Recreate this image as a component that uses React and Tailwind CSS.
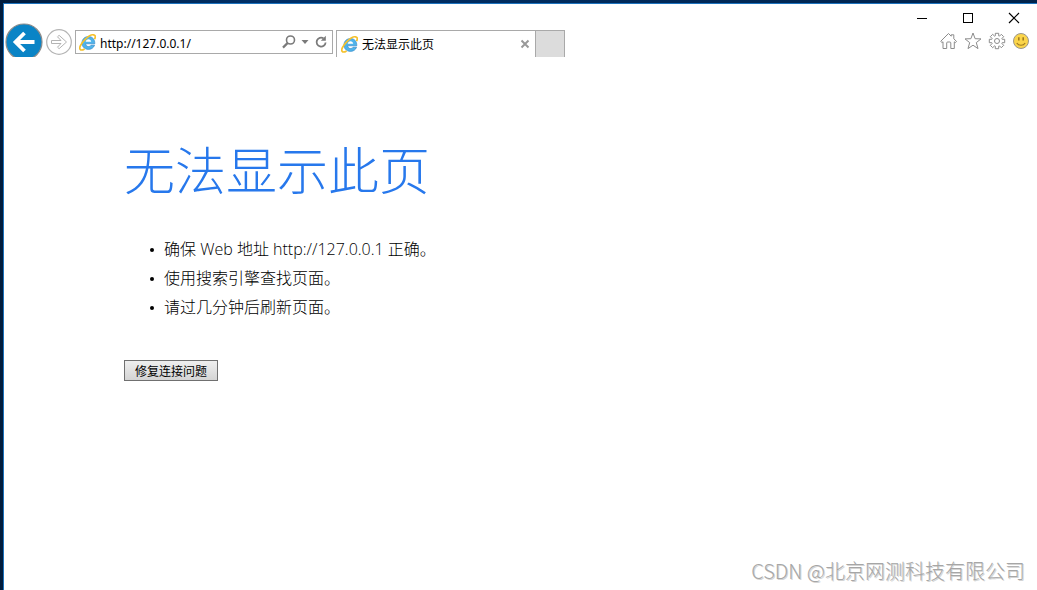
import clsx from "clsx";

const TIPS = [
  "确保 Web 地址 http://127.0.0.1 正确。",
  "使用搜索引擎查找页面。",
  "请过几分钟后刷新页面。",
];

function IeLogo() {
  return (
    <svg viewBox="0 0 17 17" className="size-[17px] shrink-0" fill="none">
      <path
        d="M15.600 11.200c-1 2.700-3.200 4.200-6.200 4.200-3.800 0-6.500-2.700-6.500-6.300C2.900 5.300 5.700 2.500 9.500 2.500c4 0 6.500 2.900 6.300 7.300H6.700c.2 1.700 1.200 2.700 2.900 2.700 1.100 0 1.900-.4 2.400-1.300z"
        fill="#4fb3ea"
        stroke="#2b83c4"
        strokeWidth=".6"
      />
      <path d="M6.700 7.700h5.500C12 6.100 11 5.200 9.500 5.200 8 5.200 7 6.100 6.700 7.700z" fill="#fff" />
      <path
        d="M15.500 5.200c.9-1.800 1-3.400 0-4-1.900-1.100-6.100.9-9.800 4.600C1.700 9.800-.2 14 1.200 15.400c.8.900 2.500.600 4.400-.5"
        stroke="#f5c12c"
        strokeWidth="1.700"
      />
    </svg>
  );
}

function CaptionButton({ label, children }) {
  return (
    <button aria-label={label} className="flex h-7 w-[46px] items-center justify-center">
      <svg viewBox="0 0 12 12" className="size-3" fill="none" stroke="#000" shapeRendering="crispEdges">
        {children}
      </svg>
    </button>
  );
}

function ToolButton({ label, children }) {
  return (
    <button aria-label={label}>
      <svg viewBox="0 0 18 18" className="size-[18px]" fill="none" stroke="#8c8c8c">
        {children}
      </svg>
    </button>
  );
}

function TitleBar() {
  return (
    <div className="flex h-[26px] justify-end">
      <CaptionButton label="最小化">
        <path d="M1 6.500h10" />
      </CaptionButton>
      <CaptionButton label="最大化">
        <path d="M1.500 1.500h9v9h-9z" />
      </CaptionButton>
      <CaptionButton label="关闭">
        <path d="M1 1l10 10M11 1L1 11" shapeRendering="auto" strokeWidth="1.200" />
      </CaptionButton>
    </div>
  );
}

function AddressBar() {
  return (
    <form
      className="flex h-6 w-[258px] items-center border border-[#a9a9a9] bg-white pr-[3px] pl-[3px]"
      onSubmit={(e) => e.preventDefault()}
    >
      <IeLogo />
      <input
        aria-label="地址"
        defaultValue="http://127.0.0.1/"
        className="ml-1 h-full w-0 flex-1 bg-transparent pt-[2px] font-['Noto_Sans','Noto_Sans_CJK_SC',sans-serif] text-xs text-black outline-none"
      />
      <button aria-label="搜索" type="submit">
        <svg viewBox="0 0 16 16" className="size-4" fill="none" stroke="#7a7a7a">
          <circle cx="9.500" cy="6" r="4" strokeWidth="1.600" />
          <path d="M6.700 8.900L2 13.600" strokeWidth="2.200" />
        </svg>
      </button>
      <button aria-label="显示地址列表" type="button" className="px-1">
        <svg viewBox="0 0 8 4" className="h-1 w-2">
          <path d="M.5 0h7L4 4z" fill="#7a7a7a" />
        </svg>
      </button>
      <button aria-label="刷新" type="button">
        <svg viewBox="0 0 16 16" className="size-4" fill="none" stroke="#7a7a7a" strokeWidth="1.800">
          <path d="M10.500 4.300A4.500 4.500 0 1 0 12.600 8.500" />
          <path d="M12.800 1.800v5H7.800z" fill="#7a7a7a" stroke="none" />
        </svg>
      </button>
    </form>
  );
}

function Tab({ title, active }) {
  return (
    <div
      className={clsx(
        "flex h-[27px] items-center border-t border-l border-[#a9a9a9]",
        active ? "w-[199px] bg-white pr-1 pl-1" : "w-[30px] border-r bg-[#dcdcdc]"
      )}
    >
      {active ? (
        <>
          <IeLogo />
          <span className="ml-1 flex-1 text-xs text-black">{title}</span>
          <button aria-label="关闭选项卡">
            <svg viewBox="0 0 12 12" className="size-3" fill="none" stroke="#999" strokeWidth="2">
              <path d="M2.500 2.500l7 7M9.500 2.500l-7 7" />
            </svg>
          </button>
        </>
      ) : (
        <button aria-label="新建选项卡" className="size-full" />
      )}
    </div>
  );
}

function NavBar() {
  return (
    <div className="flex h-[27px] items-start">
      {/* the back button is taller than the bar, the page below covers its lower edge */}
      <div className="flex h-6 items-center gap-[3px] pl-[1px]">
        <button aria-label="后退">
          <svg viewBox="0 0 38 38" className="size-[38px]" fill="none">
            <circle cx="19" cy="19" r="18" fill="#0a84c6" stroke="#8c8c8c" strokeWidth="1.200" />
            <path d="M29.500 19H11M19.500 10l-9 9 9 9" stroke="#fff" strokeWidth="3.800" />
          </svg>
        </button>
        <button aria-label="前进">
          <svg viewBox="0 0 26 26" className="size-[26px]" fill="none" stroke="#b4b4b4">
            <circle cx="13" cy="13" r="12.300" strokeWidth="1.200" />
            <path d="M5.500 11.500h9.500l-3.500-3.700 1.600-1.500L20.500 13l-7.400 6.700-1.600-1.500 3.500-3.700H5.500z" />
          </svg>
        </button>
        <AddressBar />
      </div>
      <div className="ml-[3px] flex">
        <Tab title="无法显示此页" active />
        <Tab />
      </div>
      <div className="ml-auto flex h-6 items-center gap-[6px] pr-[7px] pb-[2px]">
        <ToolButton label="主页">
          <path d="M.8 9.200L8.500 1.500l2.700 2.700V2.800h2.600v4l2.700 2.600-1 1.200-1.200-.8v6.700H10.800v-5.500a1 1 0 0 0-1-1H7.700a1 1 0 0 0-1 1v5.500H3V9.800l-1.200.8z" />
        </ToolButton>
        <ToolButton label="收藏夹">
          <path d="M9 1l2.100 5.700 5.900.2-4.700 3.700 1.700 6L9 13.200l-5 3.400 1.700-6L1 6.900l5.900-.2z" />
        </ToolButton>
        <ToolButton label="工具">
          <path d="M7.300 3.800V1.300h3.400v2.500l.8.300 1.800-1.800 2.400 2.400-1.800 1.800.3.800h2.500v3.400h-2.500l-.3.800 1.800 1.800-2.400 2.400-1.800-1.800-.8.300v2.500H7.300v-2.500l-.8-.3-1.800 1.800-2.400-2.400 1.800-1.800-.3-.8H1.300V7.300h2.500l.3-.8-1.800-1.800 2.400-2.400 1.800 1.800z" strokeLinejoin="round" />
          <circle cx="9" cy="9" r="2.500" />
        </ToolButton>
        <ToolButton label="发送笑脸">
          <circle cx="9" cy="9" r="7.500" fill="#fbd54a" stroke="#9b968a" />
          <path d="M6.800 5.200v3.300M11.200 5.200v3.300" stroke="#a07c20" strokeWidth="1.600" />
          <path d="M4.800 11c1.800 3 6.600 3 8.400 0" stroke="#a07c20" strokeWidth="1.200" />
        </ToolButton>
      </div>
    </div>
  );
}

export default function App() {
  return (
    <div className="relative flex min-h-screen flex-col bg-linear-to-r from-[#001c3d] via-[#003068] via-25% to-[#00234b] pt-[3px] pl-[3px] font-['Noto_Sans_CJK_SC',sans-serif]">
      <div className="flex flex-1 flex-col border-t border-l border-[#1c72bd] bg-white">
        <TitleBar />
        <NavBar />
        <main className="relative flex-1 bg-white px-[120px] pt-[77px]">
          <h1 className="text-[51px] leading-[68px] font-light text-[#2778ec]">无法显示此页</h1>
          <ul className="mt-[33px] pl-[26px] font-['Open_Sans','Noto_Sans_CJK_SC',sans-serif] text-base leading-[29px] font-light text-black">
            {TIPS.map((tip) => (
              <li key={tip} className="flex items-center gap-[10px] before:size-1 before:rounded-full before:bg-black">
                {tip}
              </li>
            ))}
          </ul>
          <button className="mt-[38px] h-[21px] w-[94px] border border-[#707070] bg-linear-to-b from-[#efefef] to-[#d4d4d4] text-xs text-black">
            修复连接问题
          </button>
        </main>
      </div>
      <div className="absolute right-3 bottom-[5px] text-xl font-light text-[#a6a6a6] [text-shadow:1px_1px_0_#d4d4d4]">
        CSDN @北京网测科技有限公司
      </div>
    </div>
  );
}
